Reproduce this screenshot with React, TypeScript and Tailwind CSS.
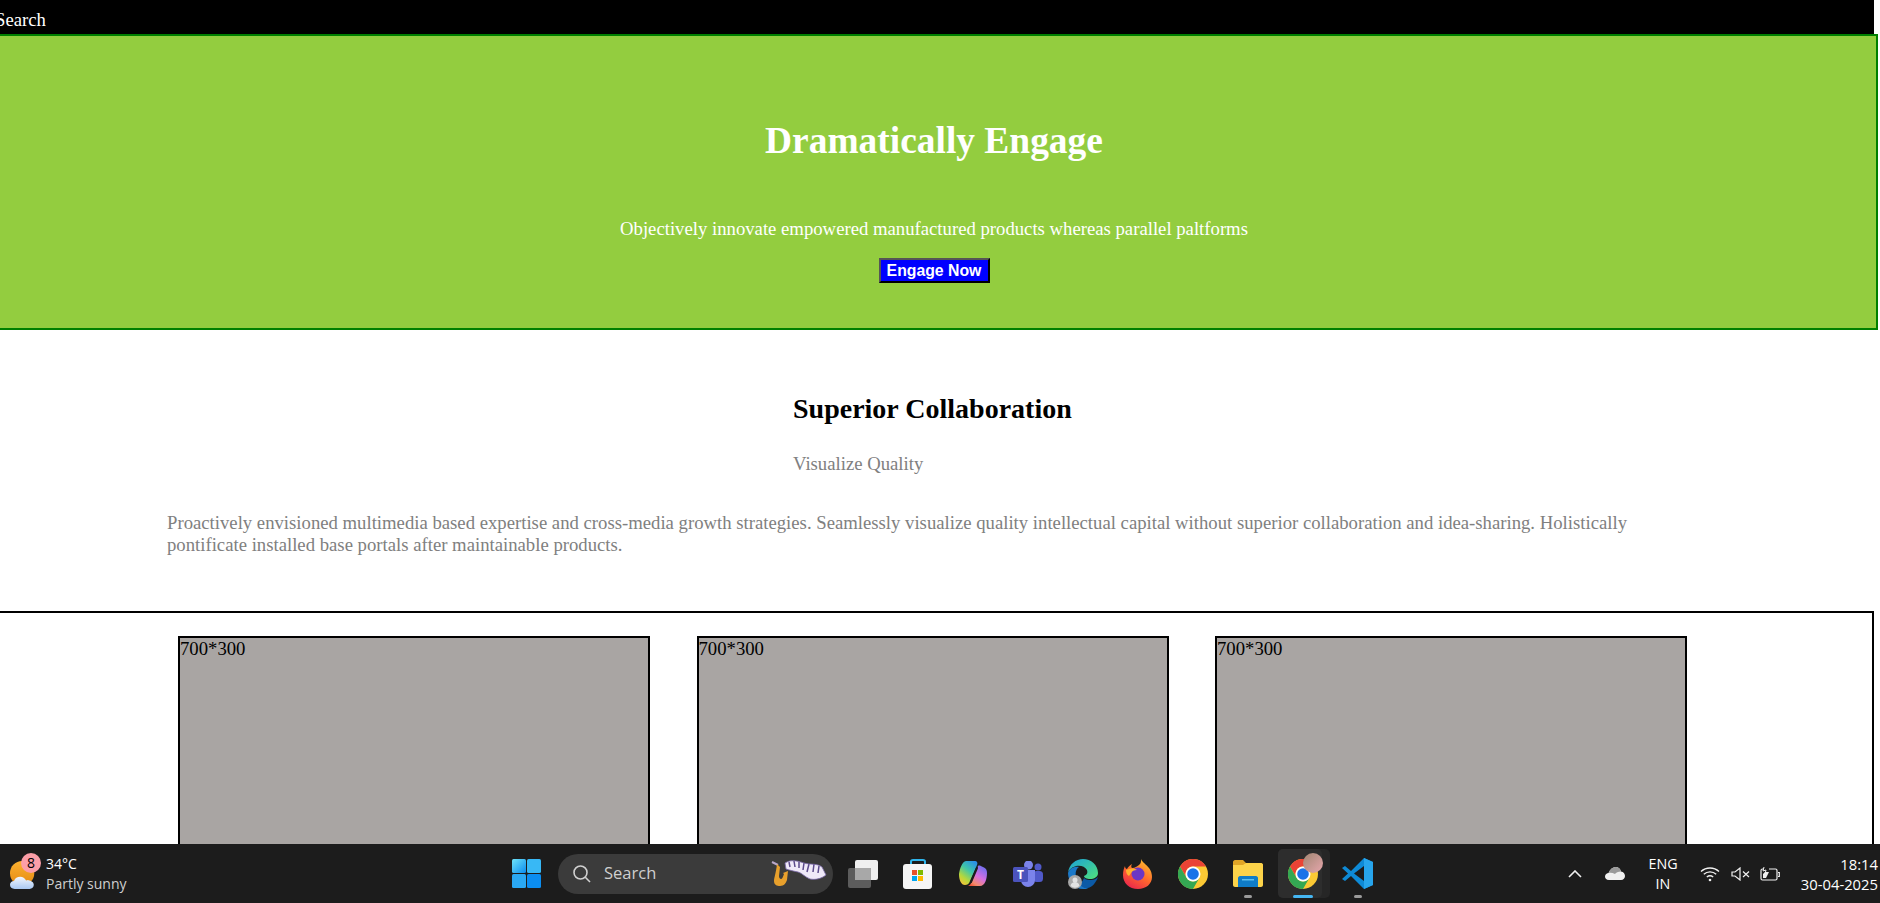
const cards = [1, 2, 3];

function Weather() {
  return (
    <svg width="28" height="28" viewBox="0 0 30 30">
      <defs>
        <linearGradient id="sun" x1="0" y1="0" x2="0" y2="1">
          <stop offset="0" stopColor="#fbb130" />
          <stop offset="1" stopColor="#e58a12" />
        </linearGradient>
        <linearGradient id="cloud" x1="0" y1="0" x2="0" y2="1">
          <stop offset="0" stopColor="#f2f6fd" />
          <stop offset="1" stopColor="#a9c8f2" />
        </linearGradient>
      </defs>
      <circle cx="13" cy="13" r="13" fill="url(#sun)" />
      <path d="M5 30c-3 0-5-2-5-4.500 0-2.300 2-4 4.300-4 1-3 3.700-4.500 6.500-4.500 3 0 5.200 1.500 6.400 4 .8-.4 1.700-.6 2.500-.5 3 .3 5.800 2.200 5.800 5 0 2.500-2 4.500-4.500 4.500z" fill="url(#cloud)" />
    </svg>
  );
}

function WinLogo() {
  return (
    <svg width="29" height="29" viewBox="0 0 29 29">
      <defs>
        <linearGradient id="win" x1="0" y1="0" x2="1" y2="1">
          <stop offset="0" stopColor="#6fe3f7" />
          <stop offset="1" stopColor="#0a8cf0" />
        </linearGradient>
      </defs>
      <rect x="0" y="0" width="14" height="14" rx="1.500" fill="url(#win)" />
      <rect x="15" y="0" width="14" height="14" rx="1.500" fill="#38b8f5" />
      <rect x="0" y="15" width="14" height="14" rx="1.500" fill="#2aa8f3" />
      <rect x="15" y="15" width="14" height="14" rx="1.500" fill="#0b8df0" />
    </svg>
  );
}

function SaxPiano() {
  return (
    <svg width="56" height="27" viewBox="0 0 56 27">
      <path d="M1 2l6 3" stroke="#b9a7c9" strokeWidth="2" fill="none" />
      <path d="M6 4l3 3-1 9c0 2 1 3 2 3s2-2 3-5l-1-1 5-2-1 9c-1 3-3 6-7 6-3 0-6-1-6-5 0-3 2-8 3-17z" fill="#e8a02c" />
      <path d="M14 3C20-1 27 1 33 3s13 0 18 4l4 8c-5 4-11 5-16 4-5-2-8-6-12-7-5-1-9-2-12-3z" fill="#efe9f8" />
      <path d="M18 2l1 5M23 1l1 6M28 2v6M33 3l-1 7M38 4l-2 8M43 4l-1 8M48 6l-1 7" stroke="#5b4a8a" strokeWidth="1.500" />
      <path d="M14 3C20-1 27 1 33 3s13 0 18 4l4 8c-5 4-11 5-16 4-5-2-8-6-12-7-5-1-9-2-12-3z" fill="none" stroke="#7a68a8" strokeWidth="0.800" />
    </svg>
  );
}

function TaskView() {
  return (
    <svg width="30" height="28" viewBox="0 0 30 28">
      <rect x="0" y="8" width="23" height="20" rx="2" fill="#5c5c5c" />
      <rect x="7" y="0" width="23" height="20" rx="2" fill="#f0f0f0" />
      <rect x="7" y="8" width="16" height="12" fill="#a8a8a8" />
    </svg>
  );
}

function Store() {
  return (
    <svg width="30" height="30" viewBox="0 0 30 30">
      <path d="M8 6V2.500C8 1 9 1 10 1h10c1 0 2 0 2 1.500V6" fill="none" stroke="#2fb5ec" strokeWidth="2" />
      <rect x="0" y="5" width="29" height="25" rx="3" fill="#f5f5f5" />
      <rect x="9" y="11" width="5" height="5" fill="#e8502a" />
      <rect x="15" y="11" width="5" height="5" fill="#7fba00" />
      <rect x="9" y="17" width="5" height="5" fill="#00a4ef" />
      <rect x="15" y="17" width="5" height="5" fill="#ffb900" />
    </svg>
  );
}

function Copilot() {
  return (
    <svg width="28" height="25" viewBox="0 0 28 25">
      <defs>
        <linearGradient id="copA" x1="0.800" y1="0" x2="0.200" y2="1">
          <stop offset="0" stopColor="#2a8fe8" />
          <stop offset="0.400" stopColor="#3fc6a8" />
          <stop offset="0.750" stopColor="#b6d83a" />
          <stop offset="1" stopColor="#f6c23a" />
        </linearGradient>
        <linearGradient id="copB" x1="0.800" y1="0" x2="0.200" y2="1">
          <stop offset="0" stopColor="#6b6ff0" />
          <stop offset="0.500" stopColor="#d56fe0" />
          <stop offset="0.850" stopColor="#f48a6a" />
          <stop offset="1" stopColor="#f0553a" />
        </linearGradient>
      </defs>
      <path d="M7 0h9c2 0 3 2 2 4l-7 16c-1 3-3 4-5 4-4 0-6-5-6-11C1 7 3 1 7 0z" fill="url(#copA)" />
      <path d="M19 5c1-1 3 0 5 1 3 1 4 3 4 6 0 6-2 13-7 13H9c2-1 3-2 4-5z" fill="url(#copB)" />
      <path d="M18 7l-6 14" stroke="#1c1c1c" strokeWidth="2" strokeLinecap="round" />
    </svg>
  );
}

function Teams() {
  return (
    <svg width="30" height="26" viewBox="0 0 30 26">
      <circle cx="25" cy="6" r="3.500" fill="#5059c9" />
      <rect x="20" y="10" width="10" height="11" rx="3.500" fill="#5059c9" />
      <circle cx="15.500" cy="4" r="4.500" fill="#7b83eb" />
      <path d="M8 9h14v10a7 7 0 0 1-14 0z" fill="#7b83eb" />
      <rect x="0" y="6" width="15" height="15" rx="1.500" fill="#4b53bc" />
      <text x="7.500" y="18" textAnchor="middle" fontSize="12" fontWeight="700" fill="#fff" fontFamily="'Open Sans', sans-serif">T</text>
    </svg>
  );
}

function Edge() {
  return (
    <svg width="30" height="30" viewBox="0 0 30 30">
      <defs>
        <linearGradient id="edgeTop" x1="0" y1="0" x2="1" y2="1">
          <stop offset="0" stopColor="#1aa0d8" />
          <stop offset="1" stopColor="#50e27c" />
        </linearGradient>
      </defs>
      <path d="M0 14C1 5 8 0 15 0c8 0 15 6 15 14 0 4-4 6-8 6-3 0-6-1-6-3 3-1 4-3 3-6-2-4-7-5-11-4C5 8 1 10 0 14z" fill="url(#edgeTop)" />
      <path d="M0 14c1-4 6-7 11-6-3 2-4 6-3 10 1 5 7 10 12 11-1 1-3 1-5 1C7 30 0 23 0 14z" fill="#1b78c8" />
      <path d="M20 29c4-1 8-5 10-11-2 2-4 3-7 3-2 0-5 0-7-2-1 3-3 5-5 6 3 3 6 5 9 4z" fill="#0c5aa6" />
      <circle cx="7" cy="23" r="7" fill="#a8a8a8" />
      <circle cx="7" cy="21" r="2.500" fill="#e2e2e2" />
      <path d="M2.500 27c.5-3 2.500-4 4.500-4s4 1 4.500 4a7 7 0 0 1-9 0z" fill="#e2e2e2" />
    </svg>
  );
}

function Firefox() {
  return (
    <svg width="29" height="30" viewBox="0 0 29 30">
      <defs>
        <linearGradient id="fox" x1="0.800" y1="0" x2="0.200" y2="1">
          <stop offset="0" stopColor="#ffc22e" />
          <stop offset="0.500" stopColor="#ff6a2c" />
          <stop offset="1" stopColor="#e8214f" />
        </linearGradient>
      </defs>
      <path d="M18 0c1 3 6 6 8 9 3 4 3 8 3 9 0 7-6 12-14 12C6 30 0 24 0 16c0-4 1-7 2-9 0 2 1 3 2 3 1-2 3-4 5-5-1 2-1 3 0 4 3 0 6-2 8-4 1-1 1-3 1-5z" fill="url(#fox)" />
      <circle cx="15" cy="15" r="6.500" fill="#6b36c4" />
      <path d="M3 11c4-2 8-2 11 0-3 0-5 1-6 3l-2 3c-2-1-3-3-3-6z" fill="#ffb02e" />
    </svg>
  );
}

function Chrome() {
  return (
    <svg width="30" height="30" viewBox="0 0 30 30">
      <circle cx="15" cy="15" r="15" fill="#fcc934" />
      <path d="M2 7.500A15 15 0 0 1 28 7.500H15A7.500 7.500 0 0 0 8.500 18.750z" fill="#ea4335" />
      <path d="M2 7.500A15 15 0 0 0 15 30L21.500 18.750A7.500 7.500 0 0 1 8.500 18.750z" fill="#34a853" />
      <circle cx="15" cy="15" r="7.500" fill="#fff" />
      <circle cx="15" cy="15" r="5.800" fill="#1a73e8" />
    </svg>
  );
}

function Explorer() {
  return (
    <svg width="30" height="27" viewBox="0 0 30 27">
      <path d="M0 2c0-1 1-2 2-2h8l3 3h15c1 0 2 1 2 2v4H0z" fill="#e0a526" />
      <path d="M0 5h10l3-2h15c1 0 2 1 2 2v20c0 1-1 2-2 2H2c-1 0-2-1-2-2z" fill="#fcd34a" />
      <path d="M5 18c0-1 1-2 2-2h16c1 0 2 1 2 2v9H5z" fill="#0f7cc8" />
      <rect x="9" y="19" width="12" height="1.500" fill="#5cc0f0" />
    </svg>
  );
}

function VsCode() {
  return (
    <svg width="31" height="31" viewBox="0 0 31 31">
      <path d="M22 0l9 4v23l-9 4L9 18l-6 5-3-2 6-5.500L0 10l3-2 6 5z" fill="#0e8ad6" />
      <path d="M22 0l9 4v23l-9 4z" fill="#27a5ec" />
      <path d="M22 8L12 15.500 22 23z" fill="#1c1c1c" />
    </svg>
  );
}

function TabIcon({ mark, children }: { mark?: string; children: React.ReactNode }) {
  return (
    <div className="relative flex h-[59px] w-[55px] items-center justify-center">
      {children}
      {mark === "open" && <span className="absolute bottom-[5px] h-[3px] w-[8px] rounded-full bg-[#9a9a9a]" />}
    </div>
  );
}

export default function App() {
  return (
    <div className="flex h-screen flex-col overflow-hidden bg-white font-['Liberation_Serif',serif]">
      <main className="min-h-0 flex-1 overflow-hidden">
        <div className="-ml-[10px] w-[1888px]">
          <nav className="h-[34px] w-[1884px] bg-black pl-[5px] pt-[9px] text-[18.72px] leading-[21px] text-white">
            Search
          </nav>

          <section className="h-[296px] border-2 border-[#008000] bg-[#93cd3f] pt-[84px] text-center text-white">
            <h1 className="text-[37.44px] leading-[41px] font-bold">Dramatically Engage</h1>
            <p className="mt-[57px] text-[18.72px] leading-[21px]">
              Objectively innovate empowered manufactured products whereas parallel paltforms
            </p>
            <button className="mt-[19px] h-[25px] w-[111px] border-2 border-t-[#555] border-r-black border-b-black border-l-[#555] bg-[#0000ff] font-['Liberation_Sans',sans-serif] text-[15.800px] leading-none font-bold text-white">
              Engage Now
            </button>
          </section>

          <section className="w-[1884px] pl-[177px] pt-[63px] pb-[55px]">
            <div className="pl-[626px]">
              <h2 className="text-[28px] leading-[32px] font-bold text-black">Superior Collaboration</h2>
              <p className="mt-[28px] text-[18.72px] leading-[21px] text-[#808080]">Visualize Quality</p>
            </div>
            <p className="mt-[38px] w-[1490px] text-[18.72px] leading-[22px] text-[#808080]">
              Proactively envisioned multimedia based expertise and cross-media growth strategies. Seamlessly visualize quality intellectual capital without superior collaboration and idea-sharing. Holistically pontificate installed base portals after maintainable products.
            </p>
          </section>

          <section className="flex w-[1884px] gap-[46.500px] border-2 border-black pl-[186px] pt-[23px]">
            {cards.map((c) => (
              <div key={c} className="h-[360px] w-[472px] border-2 border-black bg-[#a9a5a3] text-[18.72px] leading-[21px] text-black">
                700*300
              </div>
            ))}
          </section>
        </div>
      </main>

      <footer className="flex h-[59px] shrink-0 items-center bg-[#1c1c1c] font-['Open_Sans',sans-serif] text-white">
        <div className="flex w-[499px] items-center pl-[10px]">
          <div className="relative h-[38px] w-[36px]">
            <div className="absolute left-0 top-[6px]">
              <Weather />
            </div>
            <span className="absolute left-[11px] -top-[2px] flex h-[20px] w-[20px] items-center justify-center rounded-full bg-[#fb9ea8] text-[14px] leading-none text-black">
              8
            </span>
          </div>
          <div className="text-[14px] leading-[20px]">
            <div>34°C</div>
            <div className="text-[#cfcfcf]">Partly sunny</div>
          </div>
        </div>

        <TabIcon>
          <WinLogo />
        </TabIcon>

        <div className="ml-[4px] flex h-[40px] w-[275px] items-center rounded-full bg-[#3b3b3b] pl-[15px] pr-[6px]">
          <svg width="18" height="18" viewBox="0 0 18 18" fill="none" stroke="#d0d0d0" strokeWidth="1.600">
            <circle cx="7.500" cy="7.500" r="6.500" />
            <path d="M12.300 12.300L17 17" />
          </svg>
          <span className="ml-[13px] text-[16.500px] leading-none text-[#cfcfcf]">Search</span>
          <div className="ml-auto">
            <SaxPiano />
          </div>
        </div>

        <div className="ml-[2px] flex items-center">
          <TabIcon><TaskView /></TabIcon>
          <TabIcon><Store /></TabIcon>
          <TabIcon><Copilot /></TabIcon>
          <TabIcon><Teams /></TabIcon>
          <TabIcon><Edge /></TabIcon>
          <TabIcon><Firefox /></TabIcon>
          <TabIcon><Chrome /></TabIcon>
          <TabIcon mark="open"><Explorer /></TabIcon>
          <div className="relative flex h-[59px] w-[55px] items-center justify-center">
            <span className="absolute left-[3px] top-[5px] h-[49px] w-[52px] rounded-[5px] bg-[#262626]" />
            <span className="absolute left-[3px] top-[5px] h-[49px] w-[44px] rounded-[5px] bg-[#2d2d2d]" />
            <div className="relative">
              <Chrome />
            </div>
            <span className="absolute left-[28px] top-[9px] h-[20px] w-[20px] rounded-full bg-[linear-gradient(135deg,#a08672,#e8a7ad)]" />
            <span className="absolute bottom-[5px] left-[18px] h-[3px] w-[20px] rounded-full bg-[#45b6f2]" />
          </div>
          <TabIcon mark="open"><VsCode /></TabIcon>
        </div>

        <div className="ml-auto flex items-center pr-[2px]">
          <div className="flex w-[30px] justify-center">
            <svg width="14" height="8" viewBox="0 0 14 8" fill="none" stroke="#f0f0f0" strokeWidth="1.600">
              <path d="M1 7l6-6 6 6" />
            </svg>
          </div>
          <div className="ml-[10px] flex w-[30px] justify-center">
            <svg width="20" height="13" viewBox="0 0 20 13">
              <path d="M4 13C1 13 0 11 0 9.500 0 7.500 2 6 3.500 6 5 2 8 0 10.500 0c3 0 5 2 5.500 4.500 2.500.3 4 2.500 4 4.500s-1.500 4-4 4z" fill="#f0f0f0" />
              <path d="M3.500 6C5 2 8 0 10.500 0c3 0 5 2 5.500 4.500-3 0-5 1-6 2.500C8 6 5.500 5.500 3.500 6z" fill="#9a9a9a" />
            </svg>
          </div>
          <div className="ml-[13px] w-[40px] text-center text-[14.300px] leading-[20px]">
            <div>ENG</div>
            <div>IN</div>
          </div>
          <div className="ml-[12px] flex w-[30px] justify-center">
            <svg width="20" height="16" viewBox="0 0 20 16" fill="none" stroke="#f0f0f0" strokeWidth="1.300">
              <path d="M1 5.500C6 .8 14 .8 19 5.500" />
              <path d="M3.800 8.300C7.300 5 12.700 5 16.200 8.300" />
              <path d="M6.800 11C8.600 9.600 11.400 9.600 13.200 11" />
              <circle cx="10" cy="14" r="1.300" fill="#f0f0f0" stroke="none" />
            </svg>
          </div>
          <div className="flex w-[30px] justify-center">
            <svg width="19" height="14" viewBox="0 0 19 14" fill="none" stroke="#f0f0f0" strokeWidth="1.200">
              <path d="M1 5h3l5-4v12l-5-4H1z" />
              <path d="M12 4.500l6 5.500M18 4.500l-6 5.500" />
            </svg>
          </div>
          <div className="flex w-[30px] justify-center">
            <svg width="20" height="15" viewBox="0 0 20 15" fill="none" stroke="#f0f0f0" strokeWidth="1.200">
              <path d="M4 3H2.500C1.500 3 1 3.500 1 4.500v8c0 1 .5 1.500 1.500 1.500h13c1 0 1.500-.5 1.500-1.500v-8c0-1-.5-1.500-1.500-1.500H9" />
              <path d="M18 6.500h1.300v4H18" />
              <path d="M3 12V8l2-2h4l-3 6z" fill="#f0f0f0" stroke="none" />
              <path d="M4 1l-1 4 3-1-1 4" strokeWidth="1" />
            </svg>
          </div>
          <div className="w-[93px] text-right text-[14.800px] leading-[20px]">
            <div>18:14</div>
            <div>30-04-2025</div>
          </div>
        </div>
      </footer>
    </div>
  );
}
